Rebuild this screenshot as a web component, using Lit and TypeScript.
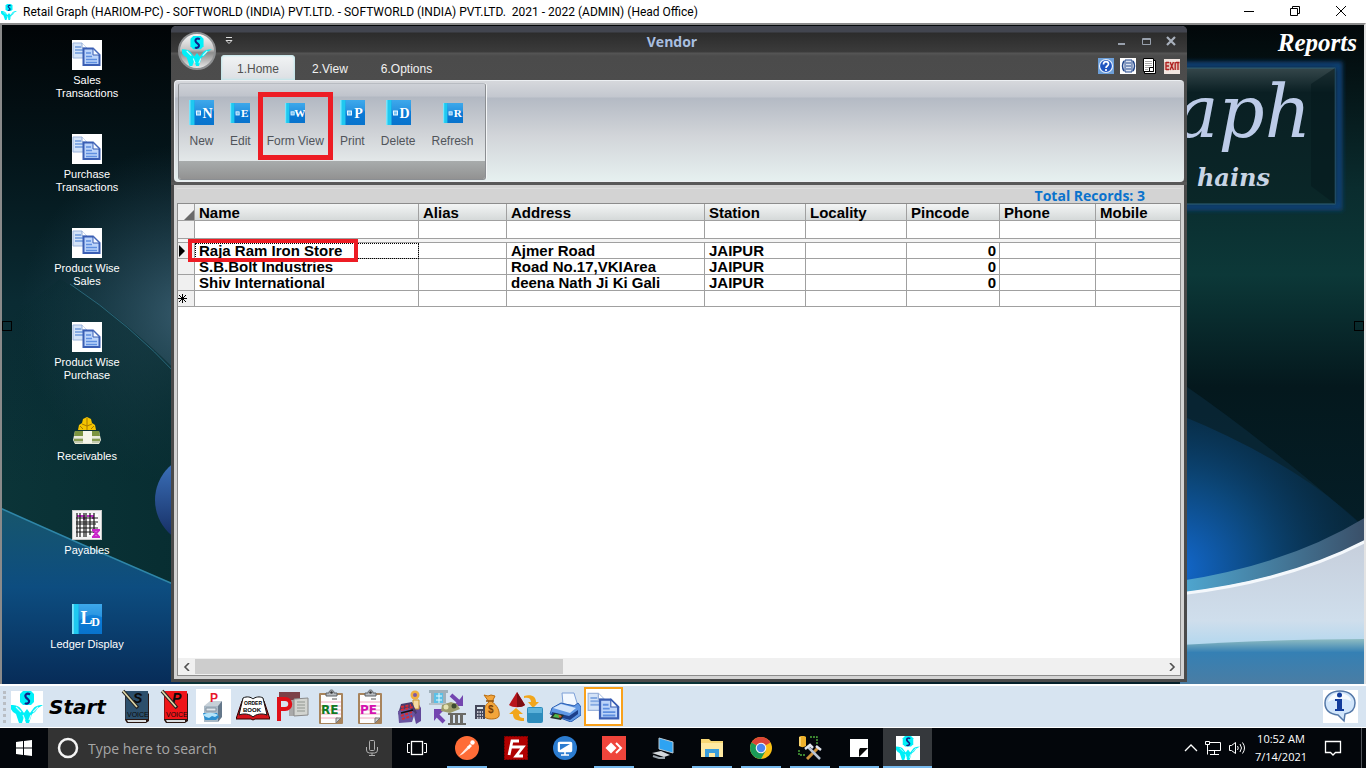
import { LitElement, html, svg, css, nothing } from "lit";
import { customElement, property } from "lit/decorators.js";
import { classMap } from "lit/directives/class-map.js";

/* ---------- shared artwork ---------- */

const lotus = (size: number, plate = "none") => html`
  <svg width=${size} height=${size} viewBox="0 0 32 32" aria-hidden="true">
    <rect width="32" height="32" fill=${plate} />
    <path d="M12 0h8l3 3v8l-3 3h-8l-3-3V3z" fill="#00f0f8" />
    <path d="M19 3.500c-3-2-6 .5-4 3s4 2.500 3 4.500-3 2-4 1" fill="none" stroke="#10208a" stroke-width="2.200" />
    <path d="M0 14c5 0 8 1 10 4l3 4 3-4 3 4 3-4c2-3 5-4 10-4l-5 3-3 4-3 2-3 9h-3l-2-6-2 6h-3l-3-9-3-2-3-4z" fill="#00f0f8" />
    <path d="M5 16l5 5M27 16l-5 5M12 24l2 5M20 24l-2 5" stroke="#fff" stroke-width="1.200" fill="none" opacity=".8" />
  </svg>`;

const docs = (size: number) => html`
  <svg width=${size} height=${size} viewBox="0 0 30 30" aria-hidden="true">
    <rect width="30" height="30" fill="#fff" />
    <path d="M1 3h9l5 5v10H1z" fill="#d3e3f8" stroke="#9db5dc" />
    <path d="M10 3v5h5" fill="#fff" stroke="#8fa9d4" />
    <path d="M3 7h6M3 10h8M3 13h8" stroke="#86abe2" stroke-width="1.800" />
    <path d="M11.500 8.500H21l6.500 6.500v10H11.500z" fill="#bcd4fa" stroke="#3a5eb4" stroke-width="2" />
    <path d="M21 8.500V15h6.500z" fill="#f4f9ff" stroke="#3a5eb4" />
    <path d="M14 13h5M14 16.500h6M14 19.500h11M14 22.500h11" stroke="#5f8fe0" stroke-width="1.600" />
  </svg>`;

const book = (letter: string, size: number, sub = "") => html`
  <svg width=${size} height=${size} viewBox="0 0 25 25" aria-hidden="true">
    <defs>
      <linearGradient id="cover" x1="0" y1="0" x2="0" y2="1">
        <stop offset="0" stop-color="#2f9fe8" /><stop offset=".5" stop-color="#0a7ad6" /><stop offset="1" stop-color="#0873cc" />
      </linearGradient>
    </defs>
    <rect width="25" height="25" fill="url(#cover)" />
    <path d="M6 0h19v11C17 7 12 9 6 14z" fill="#5ab9f2" opacity=".35" />
    <rect width="5.500" height="25" fill="#1fc8f0" /><rect width="1.500" height="25" fill="#7be4fa" />
    ${sub
      ? svg`<text x="7" y="17" font-family="Liberation Serif, serif" font-weight="700" font-size="15" fill="#fff">${letter}</text>
            <text x="16" y="18" font-family="Liberation Serif, serif" font-weight="700" font-size="10" fill="#fff">${sub}</text>`
      : svg`<rect x="7.500" y="11" width="4" height="4" fill="#7cc4f4" stroke="#e8f6ff" />
            <text x="18.500" y="17.500" text-anchor="middle" font-family="Liberation Serif, serif" font-weight="700" font-size="14" fill="#fff">${letter}</text>`}
  </svg>`;

const money = () => html`
  <svg width="30" height="30" viewBox="0 0 30 30" aria-hidden="true">
    <path d="M11 3l4-2 4 2 1 4 3 2 1 5H6l1-5 3-2z" fill="#f5c400" />
    <path d="M10 8l5 2 5-2M15 2v12M8 10l3 3M22 10l-3 3" stroke="#a87800" fill="none" />
    <path d="M3 15h24l2 9-2 4H3l-2-4z" fill="#e9ead9" /><path d="M3 15h8v5H2zM20 15h7l1 5h-8z" fill="#7c9440" />
    <path d="M2 22h26v5H2z" fill="#c4ccb0" /><path d="M11 15h9v12h-9z" fill="#f6f6ea" /><path d="M2 24h9M20 24h8" stroke="#879c52" stroke-width="2" />
  </svg>`;

const ledgerGrid = () => html`
  <svg width="30" height="30" viewBox="0 0 30 30" aria-hidden="true">
    <rect x=".5" y=".5" width="29" height="29" fill="#f4f4f4" stroke="#c9c9c9" />
    <path d="M4 4h22v22H4z" fill="#fff" />
    <path d="M5 6h7v4M15 6h6v3" stroke="#c030c8" stroke-width="2" fill="none" />
    <path d="M5 3v24M8 3v24M12 3v24M14 3v24M18 3v22M22 3v20M4 8h22M4 12h22M4 14h20M4 18h22M4 22h18" stroke="#1a1a1a" stroke-width="1.200" />
    <path d="M20 20h8M20 27h8M21 20l6 7M27 20l-6 7" stroke="#c824c8" stroke-width="2.200" />
  </svg>`;

const invoiceBook = (letter: string, color: string) => html`
  <svg width="30" height="36" viewBox="0 0 30 36" aria-hidden="true">
    <path d="M4 3h22l2 2v27l-3 2H6l-2-3z" fill="#2a1712" /><path d="M6 31h19v2H7z" fill="#d9dde0" />
    <path d="M4.500 2h22.500v28H4.500z" fill=${color} />
    <text x="12" y="14" font-family="Liberation Sans, sans-serif" font-weight="700" font-style="italic" font-size="14" fill="#0a0a0a">${letter}</text>
    <text x="6" y="28" font-family="Liberation Sans, sans-serif" font-size="7" fill="#0a0a0a">VOICE</text>
    <path d="M2 2l15 17" stroke="#222" stroke-width="3.500" /><path d="M2 2l14 16" stroke="#e0d8a8" stroke-width="1.600" />
  </svg>`;

const clipboard = (label: string, color: string) => html`
  <svg width="26" height="36" viewBox="0 0 26 36" aria-hidden="true">
    <rect x="1" y="4" width="24" height="31" rx="1" fill="#a8845c" /><path d="M3 6h20v23l-5 5H3z" fill="#fdfdfd" />
    <path d="M3 13h20M3 17h20M3 21h20M3 25h20M3 29h17" stroke="#f0a8c0" />
    <path d="M8 7V4h3c0-4 5-4 5 0h3v3z" fill="#b8bcc0" stroke="#5d6165" /><circle cx="13.500" cy="3.500" r="1.300" fill="#333" />
    <text x="3" y="25" font-family="DejaVu Sans, sans-serif" font-weight="700" font-size="12" fill=${color}>${label}</text>
    <path d="M23 29l-5 5v-5z" fill="#d0d0d0" stroke="#777" /><path d="M14 10h5" stroke="#555" />
  </svg>`;

const cabinet = () => html`
  <svg width="35" height="35" viewBox="0 0 35 35" aria-hidden="true">
    <rect width="35" height="35" fill="#fff" />
    <path d="M8 17l6-5h12l-3 5z" fill="#c6d0d8" /><path d="M8 17h14v16H8z" fill="#a9b9c6" /><path d="M22 17l4-5v16l-4 5z" fill="#64778a" />
    <path d="M10 19h10v3H10z" fill="#dfe6ec" stroke="#8494a2" />
    <path d="M7 24h14l2 4-3 3H9z" fill="#2b8fd0" /><path d="M7 26c4-3 10-3 15 0l-3 2-3-1-3 2-3-1z" fill="#b4e4fa" />
    <text x="14" y="13" font-family="Liberation Sans, sans-serif" font-weight="700" font-size="12" fill="#e8182a">P</text>
  </svg>`;

const orderBook = () => html`
  <svg width="34" height="28" viewBox="0 0 34 28" aria-hidden="true">
    <path d="M6 8L0 26h15l2 1 2-1h15L28 8z" fill="#d4141c" stroke="#300" />
    <path d="M7 5c4-2 8-1 10 1 2-2 7-3 10-1l4 17c-5-2-11-1-14 2-3-3-9-4-14-2z" fill="#fff" stroke="#111" />
    <text x="8" y="12" font-family="Liberation Sans, sans-serif" font-weight="700" font-size="5" fill="#000">ORDER</text>
    <text x="7" y="19" font-family="Liberation Sans, sans-serif" font-weight="700" font-size="6" fill="#000">BOOK</text>
  </svg>`;

const pBuilding = () => html`
  <svg width="34" height="32" viewBox="0 0 34 32" aria-hidden="true">
    <path d="M4 1h21v8H4z" fill="#7c4148" /><path d="M14 9h10v16H14z" fill="#a9a9a9" /><path d="M19 8l14-1v17l-14 1z" fill="#d2d4d0" stroke="#8a8a8a" />
    <path d="M22 11h8M22 14h8M22 17h8M22 20h8" stroke="#909690" />
    <path d="M4 30V8h6c7 0 7 10 0 10H5" fill="none" stroke="#e00f18" stroke-width="4" />
  </svg>`;

const clerk = () => html`
  <svg width="26" height="36" viewBox="0 0 26 36" aria-hidden="true">
    <path d="M15 14h7l3 5v13l-5 3z" fill="#62489a" /><circle cx="19" cy="6" r="4.500" fill="#f0b040" /><circle cx="19" cy="6" r="2" fill="#7d5aa6" />
    <path d="M17 11h6v9h-6z" fill="#f4d9a4" stroke="#c9952e" /><path d="M5 15l11-2 5 11-10 6-9-5z" fill="#4a3a6c" /><path d="M2 22l11-3 6 5-3 9-13 1z" fill="#6a55a0" />
    <path d="M5 18l10-2M5 21l12-3M5 27l11-4M6 30l10-3" stroke="#d82c34" stroke-width="2" stroke-dasharray="3 1.500" /><path d="M5 24l12-3" stroke="#111" stroke-width="1.500" />
  </svg>`;

const bankTransfer = () => html`
  <svg width="37" height="36" viewBox="0 0 37 36" aria-hidden="true">
    <path d="M0 1h19v3H0zM2 4h3v11H2zM14 4h3v11h-3z" fill="#9fb0ba" /><path d="M5 4h9v11H5z" fill="#5cc0e6" /><path d="M7 7h6M7 11h6M10 4v11" stroke="#e8fbff" /><path d="M0 14h19v2H0z" fill="#b7c3ca" />
    <path d="M22 6l9 8M15 33l-8-8" stroke="#7446b0" stroke-width="4" fill="none" /><path d="M34 6v11H23l4-3 4-4zM5 32V20h11l-4 4-3 3z" fill="#7446b0" />
    <path d="M13 16l9-3 6 2 3 5-10 4-9-2z" fill="#9c9b6a" /><circle cx="17" cy="18" r="2.500" fill="#e4e2b4" /><circle cx="25" cy="17" r="2.500" fill="#3c4a30" />
    <path d="M19 24h18v2H19zM21 26h3v8h-3zM26 26h3v8h-3zM31 26h3v8h-3zM19 34h18v2H19z" fill="#6a6a66" />
  </svg>`;

const moneyBag = () => html`
  <svg width="26" height="28" viewBox="0 0 26 28" aria-hidden="true">
    <path d="M10 2l4 1 3-1 4 1-3 6c5 3 8 9 7 14-1 4-14 4-15 0-1-6 1-11 5-14z" fill="#f3a53b" stroke="#b96c10" />
    <path d="M12 8h8" stroke="#8e5210" stroke-width="1.500" /><text x="14" y="20" font-family="Liberation Sans, sans-serif" font-weight="700" font-size="10" fill="#7a3e06">$</text>
    <rect x="1" y="12" width="10" height="14" fill="#44475a" /><path d="M3 14h6v2H3z" fill="#d9e6ee" /><path d="M3 19h6M3 22h6M3 25h6" stroke="#e8e8f0" stroke-width="1.500" stroke-dasharray="1.500 1" />
  </svg>`;

const cycle = () => html`
  <svg width="36" height="32" viewBox="0 0 36 32" aria-hidden="true">
    <path d="M9 1l8 13c-4 3-12 3-16 0z" fill="#b8141c" /><path d="M9 1l8 13c-3 2-5 2-8 2z" fill="#7e0c12" />
    <path d="M16 5c8-2 12 1 12 6h3l-6 6-5-6h3c0-4-3-5-7-4zM16 30c-8 0-11-2-11-7H1l7-6 7 6h-4c0 3 2 4 5 4z" fill="#f1a61c" />
    <rect x="19" y="16" width="16" height="16" rx="2" fill="#2d8cbc" /><path d="M20 17h14v5H20z" fill="#5cb2da" />
  </svg>`;

const printer = () => html`
  <svg width="32" height="30" viewBox="0 0 32 30" aria-hidden="true">
    <path d="M14 12l-1-11 12 0 4 13z" fill="#f2f8ff" stroke="#7ca0d8" /><path d="M3 16l9-5 13 3 4-3 3 4v8l-10 7L1 22z" fill="#5f97e4" stroke="#2c60b4" /><path d="M4 16l8-4 15 4-6 5z" fill="#d3e5fb" />
    <path d="M3 20l17 4 9-6v4l-8 6-19-5z" fill="#1d3f8a" /><path d="M5 21l10 2-3 5-11-2z" fill="#26302c" /><path d="M6 22l6 1-2 3-6-1z" fill="#50b848" /><path d="M9 23l4 1-2 2z" fill="#e2502c" />
  </svg>`;

const infoBubble = () => html`
  <svg width="35" height="33" viewBox="0 0 35 33" aria-hidden="true">
    <rect width="35" height="33" fill="#fff" />
    <path d="M17 1c9 0 15 5 15 12 0 6-4 10-10 11l-1 7-6-6C7 24 2 20 2 13 2 6 8 1 17 1z" fill="#d2e6fb" stroke="#5478a8" stroke-width="1.500" />
    <path d="M16 3c7 0 12 4 12 8-7-3-16-3-23 1 1-5 5-9 11-9z" fill="#fff" opacity=".8" />
    <circle cx="16.500" cy="5" r="2.500" fill="#123c9c" /><path d="M12 9h7v10h2v2h-9v-2h2v-8h-2z" fill="#123c9c" />
  </svg>`;

/* ---------- desktop wallpaper ---------- */

const wallpaper = html`
  <svg class="wallpaper" viewBox="0 0 1366 660" preserveAspectRatio="xMidYMid slice" aria-hidden="true">
    <defs>
      <linearGradient id="sky" x1="0" y1="0" x2="0" y2="1">
        <stop offset="0" stop-color="#010406" /><stop offset=".2" stop-color="#04151a" /><stop offset=".42" stop-color="#0a2b33" /><stop offset=".7" stop-color="#0b3438" />
      </linearGradient>
      <linearGradient id="teal" x1="0" y1="0" x2="0" y2="1">
        <stop offset="0" stop-color="#020709" /><stop offset=".25" stop-color="#0a2c2e" /><stop offset=".38" stop-color="#0c3838" /><stop offset=".55" stop-color="#04181d" /><stop offset=".85" stop-color="#05202b" />
      </linearGradient>
      <radialGradient id="haze" cx="190" cy="290" r="170" gradientUnits="userSpaceOnUse">
        <stop offset="0" stop-color="#4a6f85" stop-opacity=".7" /><stop offset="1" stop-color="#28485a" stop-opacity="0" />
      </radialGradient>
      <linearGradient id="shade" x1="0" y1="0" x2="1" y2="0"><stop offset="0" stop-color="#062a2e" stop-opacity="0" /><stop offset="1" stop-color="#062a2e" stop-opacity=".75" /></linearGradient>
      <linearGradient id="sea" x1="0" y1="0" x2="0" y2="1">
        <stop offset="0" stop-color="#17566c" /><stop offset=".45" stop-color="#0d4d80" /><stop offset="1" stop-color="#072c58" />
      </linearGradient>
      <radialGradient id="glow" cx="1175" cy="545" r="180" gradientUnits="userSpaceOnUse">
        <stop offset="0" stop-color="#1470e0" /><stop offset=".5" stop-color="#0c4a80" /><stop offset="1" stop-color="#072c48" stop-opacity=".5" />
      </radialGradient>
      <linearGradient id="orb" x1="0" y1="0" x2="0" y2="1"><stop offset="0" stop-color="#3f78c4" /><stop offset="1" stop-color="#12275a" /></linearGradient>
      <linearGradient id="foam" x1="0" y1="0" x2="0" y2="1"><stop offset="0" stop-color="#c6cedb" /><stop offset=".65" stop-color="#cfdeec" /><stop offset="1" stop-color="#9ed2f0" /></linearGradient>
      <linearGradient id="lip" x1="0" y1="0" x2="1" y2="0"><stop offset="0" stop-color="#4fa8d2" /><stop offset="1" stop-color="#3a4f68" /></linearGradient>
      <linearGradient id="shore" x1="0" y1="0" x2="0" y2="1"><stop offset="0" stop-color="#8fbcc2" /><stop offset=".3" stop-color="#3580b4" /><stop offset="1" stop-color="#4a7da4" /></linearGradient>
      <linearGradient id="panel" x1="0" y1="0" x2="0" y2="1"><stop offset="0" stop-color="#35474b" /><stop offset=".18" stop-color="#0a1f23" /><stop offset="1" stop-color="#0a2728" /></linearGradient>
      <filter id="soft"><feGaussianBlur stdDeviation="2" /></filter>
    </defs>
    <rect width="700" height="660" fill="url(#sky)" />
    <rect x="700" width="666" height="660" fill="url(#teal)" />
    <rect y="120" width="360" height="360" fill="url(#haze)" />
    <path d="M60 255Q130 295 200 372V640H0V300z" fill="url(#shade)" />
    <path d="M70 260Q130 300 180 354" stroke="#2f7388" fill="none" opacity=".8" />
    <path d="M0 484Q80 520 180 563V660H0z" fill="url(#sea)" />
    <path d="M0 484Q80 520 180 563" stroke="#2f86a8" stroke-width="1.500" fill="none" />
    <circle cx="201" cy="476" r="46" fill="url(#orb)" />
    <path d="M1180 358Q1270 420 1366 505V620H1180z" fill="#0c3046" opacity=".5" />
    <path d="M1180 391Q1300 440 1366 505V620H1180z" fill="url(#glow)" opacity=".9" />
    <path d="M1180 557Q1290 540 1366 493V560L1180 600z" fill="url(#lip)" />
    <path d="M1180 569Q1290 556 1366 516V640H1180z" fill="url(#foam)" />
    <path d="M1180 570Q1290 557 1366 517" stroke="#f4f8fc" stroke-width="3" fill="none" />
    <path d="M1180 621Q1280 615 1366 615V660H1180z" fill="url(#shore)" />
    <g>
      <rect x="1080" y="41" width="259" height="142" fill="none" stroke="#0e3f72" stroke-width="7" filter="url(#soft)" />
      <rect x="1080" y="44" width="255" height="136" fill="url(#panel)" stroke="#2f6078" />
      <path d="M1335 44v136l-24-18V60z" fill="#03181b" opacity=".5" />
      <text x="1311" y="113" text-anchor="end" font-family="DejaVu Serif, serif" font-style="italic" font-size="72" fill="#bccbe8">aph</text>
      <text x="1270" y="162" text-anchor="end" font-family="DejaVu Serif, serif" font-style="italic" font-weight="700" font-size="24" fill="#c8d4e4">hains</text>
    </g>
    <rect x="2.500" y="297.500" width="9" height="9" fill="none" stroke="#000" />
    <rect x="1354.500" y="297.500" width="9" height="9" fill="none" stroke="#000" />
  </svg>`;

/* ---------- vendor list window ---------- */

interface Vendor { name: string; alias: string; address: string; station: string; locality: string; pincode: string; phone: string; mobile: string; }

const VENDORS: Vendor[] = [
  { name: "Raja Ram Iron Store", alias: "", address: "Ajmer Road", station: "JAIPUR", locality: "", pincode: "0", phone: "", mobile: "" },
  { name: "S.B.Bolt Industries", alias: "", address: "Road No.17,VKIArea", station: "JAIPUR", locality: "", pincode: "0", phone: "", mobile: "" },
  { name: "Shiv International", alias: "", address: "deena Nath Ji Ki Gali", station: "JAIPUR", locality: "", pincode: "0", phone: "", mobile: "" },
];

const COLUMNS: { key: keyof Vendor; label: string }[] = [
  { key: "name", label: "Name" }, { key: "alias", label: "Alias" }, { key: "address", label: "Address" }, { key: "station", label: "Station" },
  { key: "locality", label: "Locality" }, { key: "pincode", label: "Pincode" }, { key: "phone", label: "Phone" }, { key: "mobile", label: "Mobile" },
];

const COMMANDS = [
  { label: "New", letter: "N", size: 25 }, { label: "Edit", letter: "E", size: 20 }, { label: "Form View", letter: "W", size: 20, marked: true },
  { label: "Print", letter: "P", size: 25 }, { label: "Delete", letter: "D", size: 25 }, { label: "Refresh", letter: "R", size: 20 },
];

@customElement("vendor-window")
class VendorWindow extends LitElement {
  static styles = css`
    :host { display: flex; flex-direction: column; box-sizing: border-box; border: solid #4a4a4a; border-width: 0 3px 3px; border-radius: 5px 5px 0 0; background: #d3d3d3; font-family: "Liberation Sans", Arial, sans-serif; font-size: 12px; }
    *, *::after { box-sizing: border-box; }
    button { font: inherit; border: 0; background: none; padding: 0; color: inherit; }
    svg { display: block; }
    .chrome { margin: 0 -3px; padding: 0 3px; border-radius: 5px 5px 0 0; background: linear-gradient(#42454f 0 6px, #2c2c2c 7px, #3b3b3b 26px, #565656 27px, #4b4b4b 30px, #505050); border-bottom: 3px solid #585858; }
    .titlebar { display: flex; align-items: center; height: 29px; padding: 1px 7px 0 50px; }
    .titlebar h1 { flex: 1; margin: 0; padding-right: 5px; text-align: center; color: #a9bfe0; font: 700 14px "Open Sans", sans-serif; }
    .quick { color: #ddd; }
    .controls { display: flex; gap: 13px; }
    .tabrow { display: flex; align-items: end; gap: 1px; height: 25px; padding: 0 4px 0 47px; }
    .tab { height: 25px; padding: 2px 16px 0; color: #f2f2f2; }
    .tab.on { color: #505050; background: linear-gradient(#f2f4f5, #dcdfe3); border-radius: 4px 4px 0 0; box-shadow: inset 0 0 2px 1px #bfe6ea; }
    .tools { display: flex; gap: 6px; margin-left: auto; padding-bottom: 6px; }
    .orb { position: absolute; left: 4px; top: 6px; display: grid; place-items: center; width: 38px; height: 38px; border: 2px solid #8e9092; border-radius: 50%; background: linear-gradient(#fafafa, #c6c6c6 45%, #8c8c8c 55%, #e8e8e8); }
    .ribbon { padding: 2px 3px 1px; border: solid #eceff2; border-width: 1px 0 1px 1px; border-radius: 4px; background: linear-gradient(#d6d8dc, #c3c7cf 16px, #b4bac4 17px, #d2d5d9 55px, #e6f0f0); }
    .group { display: inline-block; vertical-align: top; border: 1px solid #8b8e92; border-top-color: #b8bcc2; border-radius: 3px; overflow: hidden; box-shadow: 1px 0 #f4f6f7; }
    .commands { display: flex; height: 77px; padding: 8px 3px 0 2px; background: linear-gradient(#ced1d7, #c0c4cc 12px, #b2b8c2 13px, #d0d3d7 50px, #e3e8e9); }
    .command { position: relative; display: flex; flex-direction: column; align-items: center; height: 66px; padding: 8px 8px 0; color: #50545a; }
    .art { display: grid; place-items: center; height: 25px; }
    .command .name { margin-top: 9px; }
    .command.marked::after { content: ""; position: absolute; inset: 0 -1px -2px; border: 5px solid #ed1c24; }
    .caption { height: 18px; background: linear-gradient(#a8acac, #929292); }
    .body { flex: 1; display: flex; flex-direction: column; min-height: 0; padding: 0 3px 3px; }
    .total { padding-right: 36px; border-top: 3px solid #d3d3d3; color: #0a72cc; text-align: right; font: 700 14px/15px "Open Sans", sans-serif; box-shadow: inset 0 1px #dedede; }
    .grid { flex: 1; display: flex; flex-direction: column; min-height: 0; border: 1px solid #8c8c8c; background: #fff; }
    .scroll { flex: 1; overflow: hidden; }
    table { width: 100%; table-layout: fixed; border-collapse: separate; border-spacing: 0; font-size: 15px; line-height: 15px; font-weight: 700; color: #000; }
    th, td { height: 16px; padding: 0 4px; border: solid #a0a0a0; border-width: 0 1px 1px 0; text-align: left; white-space: nowrap; }
    tr > :last-child { border-right: 0; }
    thead .heads th { height: 17px; background: linear-gradient(#f3f5f5, #d5d9d9); }
    .filter td { height: 18px; padding: 0; }
    .filter input { display: block; width: 100%; height: 17px; padding: 0 4px; border: 0; outline: 0; background: transparent; font: inherit; }
    .gap td { height: 4px; line-height: 0; background: #f4f4f4; border-right: 0; }
    .mark, .heads .mark { padding: 0; background: #f0f0f0; }
    .num { text-align: right; padding-right: 3px; }
    .current { position: relative; outline: 1px dotted #000; outline-offset: -1px; }
    .current::after { content: ""; position: absolute; left: -7px; top: -4px; width: 170px; height: 23px; border: 4px solid #ed1c24; }
    .c-mark { width: 17px; } .c-name { width: 224px; } .c-alias { width: 88px; } .c-address { width: 198px; } .c-station, .c-locality { width: 101px; } .c-pincode { width: 93px; } .c-phone { width: 96px; }
    .hbar { display: flex; align-items: center; height: 17px; background: #f0f0f0; }
    .hbar button { width: 17px; display: grid; place-items: center; }
    .track { flex: 1; height: 15px; }
    .thumb { width: 38%; height: 15px; background: #cdcdcd; }
  `;

  render() {
    return html`
      <header class="chrome">
        <div class="titlebar">
          <button class="quick" aria-label="Customize quick access"><svg width="10" height="10" fill="none" stroke="#ddd"><path d="M2 1.500h6M2 4.500h6L5 7.500z" /></svg></button>
          <h1>Vendor</h1>
          <div class="controls">
            <button aria-label="Minimize"><svg width="12" height="12"><path d="M3 8h7v2H3z" fill="#98a0ac" /></svg></button>
            <button aria-label="Maximize"><svg width="12" height="12"><path d="M2.500 3.500h8v6h-8zM2 4.500h9" fill="none" stroke="#98a0ac" /></svg></button>
            <button aria-label="Close"><svg width="12" height="12"><path d="M2 2l8 8M10 2l-8 8" stroke="#a9b1bd" stroke-width="2.200" /></svg></button>
          </div>
        </div>
        <nav class="tabrow">
          <button class="tab on">1.Home</button><button class="tab">2.View</button><button class="tab">6.Options</button>
          <div class="tools">
            <button aria-label="Help"><svg width="16" height="16"><rect width="16" height="16" fill="#6d9fd8" /><circle cx="8" cy="8" r="6.500" fill="#1f55c0" stroke="#e8f0fc" stroke-width="1.200" /><path d="M5.500 6.500c0-4 5-3.500 5-.5 0 2-2.500 2-2.500 4M8 11v2" stroke="#fff" stroke-width="1.700" fill="none" /></svg></button>
            <button aria-label="Preview"><svg width="16" height="16"><rect width="16" height="16" fill="#fff" /><path d="M5 2h7v12H5z" fill="#dce4f2" stroke="#24488c" /><path d="M4 3q-3 5 0 10M13 3q3 5 0 10" stroke="#24488c" stroke-width="1.500" fill="none" /><path d="M6 5h5M6 8h5M6 11h5" stroke="#24488c" /></svg></button>
            <button aria-label="Notes"><svg width="16" height="16"><path d="M2.500 2.500h11v13h-11z" fill="#fff" stroke="#000" /><path d="M1.500.5h10v13h-10z" fill="#fff" stroke="#000" /><path d="M3 3.500h7M3 5.500h7M3 7.500h7M3 9.500h4M3 11.500h3" stroke="#a8a8a8" /><path d="M7.500 9.500h4v4h-4z" fill="#fff" stroke="#000" /></svg></button>
            <button aria-label="Exit"><svg width="16" height="16"><rect y="1" width="16" height="15" fill="#f2e6e0" /><rect y="4" width="16" height="8" fill="#e2c2b8" /><path d="M2 4v8M2 4.500h3M2 8h3M2 11.500h3M6 4l3.500 8M9.500 4L6 12M11.200 4v8M12 4.500h3.500M14 4v8" stroke="#b02020" stroke-width="1.300" /></svg></button>
          </div>
        </nav>
        <div class="ribbon">
          <section class="group">
            <div class="commands">
              ${COMMANDS.map((c) => html`<button class=${classMap({ command: true, marked: !!c.marked })}><span class="art">${book(c.letter, c.size)}</span><span class="name">${c.label}</span></button>`)}
            </div>
            <div class="caption"></div>
          </section>
        </div>
        <button class="orb" aria-label="Application menu">${lotus(30)}</button>
      </header>
      <div class="body">
        <div class="total">Total Records: 3</div>
        <div class="grid">
          <div class="scroll">
            <table>
              <colgroup><col class="c-mark" />${COLUMNS.map((c) => html`<col class=${"c-" + c.key} />`)}</colgroup>
              <thead>
                <tr class="heads">
                  <th class="mark"><svg width="16" height="16"><path d="M16 6v10H6z" fill="#6a6a6a" /></svg></th>
                  ${COLUMNS.map((c) => html`<th scope="col">${c.label}</th>`)}
                </tr>
                <tr class="filter"><td class="mark"></td>${COLUMNS.map((c) => html`<td><input aria-label=${"Filter " + c.label} /></td>`)}</tr>
                <tr class="gap"><td colspan="9"></td></tr>
              </thead>
              <tbody>
                ${VENDORS.map((v, row) => html`<tr>
                  <td class="mark">${row === 0 ? html`<svg width="8" height="14"><path d="M1 1l6 6-6 6z" /></svg>` : nothing}</td>
                  ${COLUMNS.map((c) => html`<td class=${classMap({ num: c.key === "pincode", current: row === 0 && c.key === "name" })}>${v[c.key]}</td>`)}
                </tr>`)}
                <tr><td class="mark"><svg width="10" height="14"><path d="M4.500 2v9M0 6.500h9M1 3l7 7M8 3l-7 7" stroke="#000" /></svg></td>${COLUMNS.map(() => html`<td></td>`)}</tr>
              </tbody>
            </table>
          </div>
          <div class="hbar">
            <button aria-label="Scroll left"><svg width="8" height="8"><path d="M6 0L2 4l4 4" fill="none" stroke="#505050" stroke-width="1.600" /></svg></button>
            <div class="track"><div class="thumb"></div></div>
            <button aria-label="Scroll right"><svg width="8" height="8"><path d="M2 0l4 4-4 4" fill="none" stroke="#505050" stroke-width="1.600" /></svg></button>
          </div>
        </div>
      </div>`;
  }
}

/* ---------- system task bar ---------- */

const APPS: { label: string; open?: boolean; active?: boolean; icon: unknown }[] = [
  { label: "Postman", open: true, icon: svg`<circle cx="12" cy="12" r="12" fill="#ff6c37" /><path d="M4 20l9-10 2 2-7 6z" fill="#fff" opacity=".85" /><path d="M12 11l3-3 2 2-3 3z" fill="#fff" /><circle cx="17.500" cy="6.500" r="2.200" fill="#fff" />` },
  { label: "FileZilla", icon: svg`<rect width="24" height="24" fill="#b00000" /><rect x=".5" y=".5" width="23" height="23" fill="none" stroke="#600" stroke-dasharray="2 1" /><path d="M5 19L8 5h7M7 11h6M12 11h7l-7 9h7" fill="none" stroke="#fff" stroke-width="2.800" />` },
  { label: "Remote monitor", icon: svg`<circle cx="12" cy="12" r="12" fill="#2c7cd0" /><rect x="5.500" y="6.500" width="13" height="9" rx="1" fill="#fff" stroke="#fff" stroke-width="1.500" /><path d="M7 8h10l-10 6z" fill="#2c7cd0" /><path d="M8 19h8M12 16v3" stroke="#fff" stroke-width="1.600" />` },
  { label: "AnyDesk", open: true, icon: svg`<rect width="24" height="24" fill="#ef443b" /><path d="M9 6.500l5.500 5.500L9 17.500 3.500 12z" fill="#fff" /><path d="M14 7l5 5-5 5" fill="none" stroke="#fff" stroke-width="2" />` },
  { label: "This PC", icon: svg`<path d="M8 2l14 4v11L8 13z" fill="#2ea3f2" stroke="#b8c8d4" /><path d="M1 17l9-2 9 4-6 2z" fill="#d4d8dc" /><path d="M2 20l6 2h6" stroke="#9aa4ac" stroke-width="2" fill="none" />` },
  { label: "File Explorer", open: true, icon: svg`<path d="M1 3h8l2 2h12v16H1z" fill="#f8d775" /><path d="M1 7h22v14H1z" fill="#ffe9a2" /><path d="M5 13h14v8h-4v-4H9v4H5z" fill="#3b9edc" />` },
  { label: "Chrome", open: true, icon: svg`<circle cx="12" cy="12" r="11" fill="#fbc116" /><path d="M12 12L2.500 6.500A11 11 0 0 1 21.500 6.500z" fill="#dc4437" /><path d="M12 12L2.500 6.500A11 11 0 0 0 12 23l4.500-8z" fill="#1a9b57" /><circle cx="12" cy="12" r="5.300" fill="#f4f4f4" /><circle cx="12" cy="12" r="4.200" fill="#4a86f0" />` },
  { label: "Database tools", open: true, icon: svg`<path d="M1 1c2-1.500 5-1.500 7 0v9c-2 1.500-5 1.500-7 0z" fill="#eeb12c" /><path d="M2 1v9" stroke="#fff2b4" /><path d="M12 1h7v7M1 14v5h7" fill="none" stroke="#4fae3c" stroke-width="1.400" stroke-dasharray="2 1" /><path d="M9 23L20 12" stroke="#cf923c" stroke-width="3" /><path d="M10 11l12 12" stroke="#b8c4d4" stroke-width="2.500" /><path d="M7 13l5-4 3 3M18 10l5 4" stroke="#dfe5ee" stroke-width="2.500" fill="none" />` },
  { label: "Sticky Notes", open: true, icon: svg`<path d="M3 3h18v18H3z" fill="#fff" /><path d="M12 21v-7l1-2h8l-9 9z" fill="#080808" />` },
  { label: "Retail Graph", open: true, active: true, icon: lotus(24, "#fff") },
];

@customElement("task-bar")
class TaskBar extends LitElement {
  static styles = css`
    :host { display: flex; height: 40px; background: #03060b; color: #fff; font-family: "Open Sans", "Segoe UI", sans-serif; }
    * { box-sizing: border-box; }
    button { display: grid; place-items: center; padding: 0; border: 0; background: none; color: inherit; font: inherit; }
    svg { display: block; }
    .start { width: 48px; }
    .search { display: flex; align-items: center; gap: 9px; width: 344px; padding: 0 12px 0 9px; background: #333; }
    .search input { flex: 1; min-width: 0; padding: 0; border: 0; outline: 0; background: none; color: #fff; font: 14px "Open Sans", sans-serif; }
    .search input::placeholder { color: #a6a6a6; opacity: 1; }
    .view { width: 50px; }
    .app { position: relative; width: 49px; }
    .app.open::after { content: ""; position: absolute; bottom: 0; left: 5px; right: 4px; height: 2px; background: #76b9ed; }
    .app.active { background: #35383c; }
    .app.active::after { left: 0; right: 0; }
    .tray { display: flex; align-items: center; gap: 6px; margin-left: auto; padding-right: 4px; }
    .clock { width: 58px; text-align: center; font-size: 11px; line-height: 18px; }
    .note { width: 34px; margin-right: 5px; }
    .peek { align-self: stretch; border-left: 1px solid #50545a; }
  `;
  render() {
    return html`
      <button class="start" aria-label="Start menu"><svg width="16" height="16"><path d="M0 2l7-1v6.500H0zM8 1l8-1v7.500H8zM0 8.500h7V15l-7-1zM8 8.500h8V16l-8-1z" fill="#fff" /></svg></button>
      <label class="search"><svg width="22" height="22"><circle cx="11" cy="11" r="9" fill="none" stroke="#f4f4f4" stroke-width="2.500" /></svg>
        <input type="text" placeholder="Type here to search" aria-label="Type here to search" />
        <svg width="16" height="18" fill="none" stroke="#b0b0b0"><rect x="5.500" y="1.500" width="5" height="10" rx="1" /><path d="M2.500 8v3q0 3 3 3h5q3 0 3-3V8M8 14v3M5 16.500h6" /></svg></label>
      <button class="view" aria-label="Task view"><svg width="20" height="16" fill="none" stroke="#fff"><rect x="4.500" y="1.500" width="11" height="13" stroke-width="1.300" /><path d="M3 3.500H.5v9H3M17 3.500h2.500v9H17" /></svg></button>
      ${APPS.map((a) => html`<button class=${classMap({ app: true, open: !!a.open, active: !!a.active })} aria-label=${a.label}>${a.active ? a.icon : html`<svg width="24" height="24">${a.icon}</svg>`}</button>`)}
      <div class="tray">
        <button aria-label="Show hidden icons"><svg width="14" height="10"><path d="M1 8l6-6 6 6" fill="none" stroke="#fff" stroke-width="1.300" /></svg></button>
        <button aria-label="Network"><svg width="18" height="16" fill="none" stroke="#fff"><path d="M5.500 2.500h11v8h-12M10.500 11v3M6 14.500h9M1.500 1.500h4v3h-4zM3.500 5v9.500" /></svg></button>
        <button aria-label="Volume"><svg width="18" height="16" fill="none" stroke="#fff"><path d="M1.500 5.500h2l4-3v11l-4-3h-2zM9.500 6q1.500 2 0 4M12 4q3 4 0 8M14.500 2.500q4 5.500 0 11" /></svg></button>
        <div class="clock">10:52 AM<br />7/14/2021</div>
        <button class="note" aria-label="Notifications"><svg width="18" height="17"><path d="M1.500 1.500h15v11h-5L9 15l-2.500-2.500h-5z" fill="none" stroke="#fff" stroke-width="1.300" /></svg></button>
        <span class="peek"></span>
      </div>`;
  }
}

/* ---------- page ---------- */

const SHORTCUTS = [
  { label: ["Sales", "Transactions"], icon: docs(30) }, { label: ["Purchase", "Transactions"], icon: docs(30) },
  { label: ["Product Wise", "Sales"], icon: docs(30) }, { label: ["Product Wise", "Purchase"], icon: docs(30) },
  { label: ["Receivables"], icon: money() }, { label: ["Payables"], icon: ledgerGrid() }, { label: ["Ledger Display"], icon: book("L", 30, "D") },
];

const TOOLS: { label: string; icon: unknown; active?: boolean }[] = [
  { label: "Sales invoice", icon: invoiceBook("S", "#2c4f6c") }, { label: "Purchase invoice", icon: invoiceBook("P", "#f01418") },
  { label: "Purchase cabinet", icon: cabinet() }, { label: "Order book", icon: orderBook() }, { label: "Purchase order", icon: pBuilding() },
  { label: "Receipt entry", icon: clipboard("RE", "#127a24") }, { label: "Payment entry", icon: clipboard("PE", "#d412b0") },
  { label: "Cash desk", icon: clerk() }, { label: "Bank transfer", icon: bankTransfer() }, { label: "Cash", icon: moneyBag() },
  { label: "Stock transfer", icon: cycle() }, { label: "Print", icon: printer() }, { label: "Vendor", icon: docs(34), active: true },
];

@customElement("app-root")
export class AppRoot extends LitElement {
  @property() heading = "Retail Graph (HARIOM-PC) - SOFTWORLD (INDIA) PVT.LTD. - SOFTWORLD (INDIA) PVT.LTD.  2021 - 2022 (ADMIN) (Head Office)";

  static styles = css`
    :host { display: flex; flex-direction: column; height: 100vh; background: #fff; overflow: hidden; font-family: "Liberation Sans", Arial, sans-serif; }
    * { box-sizing: border-box; }
    button { padding: 0; border: 0; background: none; color: inherit; font: inherit; }
    svg { display: block; }
    .title { display: flex; align-items: center; height: 23px; padding: 0 18px 0 1px; }
    .title h1 { flex: 1; margin: 0 0 0 6px; color: #000; font: 12px/22px Roboto, "Segoe UI", sans-serif; white-space: pre; }
    .sys { display: flex; gap: 32px; }
    .desk { position: relative; flex: 1; min-height: 0; overflow: hidden; border: solid #8a8a8a; border-width: 2px 2px 0; border-right-color: #e3e3e3; background: #04141a; }
    .wallpaper { position: absolute; inset: -1px -2px 0; width: calc(100% + 4px); height: calc(100% + 1px); }
    .shortcuts { position: relative; display: grid; grid-auto-rows: 94px; width: 170px; padding-top: 15px; }
    .shortcut { display: flex; flex-direction: column; align-items: center; gap: 4px; color: #fff; font-size: 11px; line-height: 13px; text-decoration: none; text-align: center; }
    .shortcut span { display: block; }
    .reports { position: absolute; right: 7px; top: 3px; color: #fff; font: italic 700 25px/30px "Liberation Serif", serif; text-decoration: none; }
    .window { position: absolute; left: 169px; right: 177px; top: 1px; bottom: 2px; }
    .bar { display: flex; align-items: center; height: 44px; padding: 0 8px 0 3px; background: #d7e4f1; border: solid #fff; border-width: 2px 0 1px; }
    .grip { width: 3px; height: 32px; margin-right: 5px; border-left: 3px dotted #b9bec4; }
    .begin { display: flex; align-items: center; gap: 6px; width: 105px; color: #000; font: italic 700 20px "DejaVu Sans", Verdana, sans-serif; }
    .tool { display: grid; place-items: center; width: 39px; height: 39px; }
    .tool.on { border: 2px solid #f9a11b; background: #fff; }
    .info { margin-left: auto; }
  `;

  render() {
    return html`
      <header class="title">
        ${lotus(16)}
        <h1>${this.heading}</h1>
        <div class="sys">
          <button aria-label="Minimize"><svg width="14" height="14"><path d="M2 6.500h10" stroke="#000" /></svg></button>
          <button aria-label="Restore"><svg width="14" height="14" fill="none" stroke="#000"><path d="M2.500 3.500h7v7h-7zM4.500 3V1.500h7v7H10" /></svg></button>
          <button aria-label="Close"><svg width="14" height="14"><path d="M2 1l10 10M12 1L2 11" stroke="#000" /></svg></button>
        </div>
      </header>
      <main class="desk">
        ${wallpaper}
        <nav class="shortcuts">
          ${SHORTCUTS.map((s) => html`<a class="shortcut" href="#">${s.icon}<span>${s.label.map((line) => html`<span>${line}</span>`)}</span></a>`)}
        </nav>
        <a class="reports" href="#">Reports</a>
        <vendor-window class="window"></vendor-window>
      </main>
      <nav class="bar">
        <span class="grip"></span>
        <button class="begin">${lotus(32, "#fff")}Start</button>
        ${TOOLS.map((t) => html`<button class=${classMap({ tool: true, on: !!t.active })} aria-label=${t.label}>${t.icon}</button>`)}
        <button class="info" aria-label="Information">${infoBubble()}</button>
      </nav>
      <task-bar></task-bar>`;
  }
}
